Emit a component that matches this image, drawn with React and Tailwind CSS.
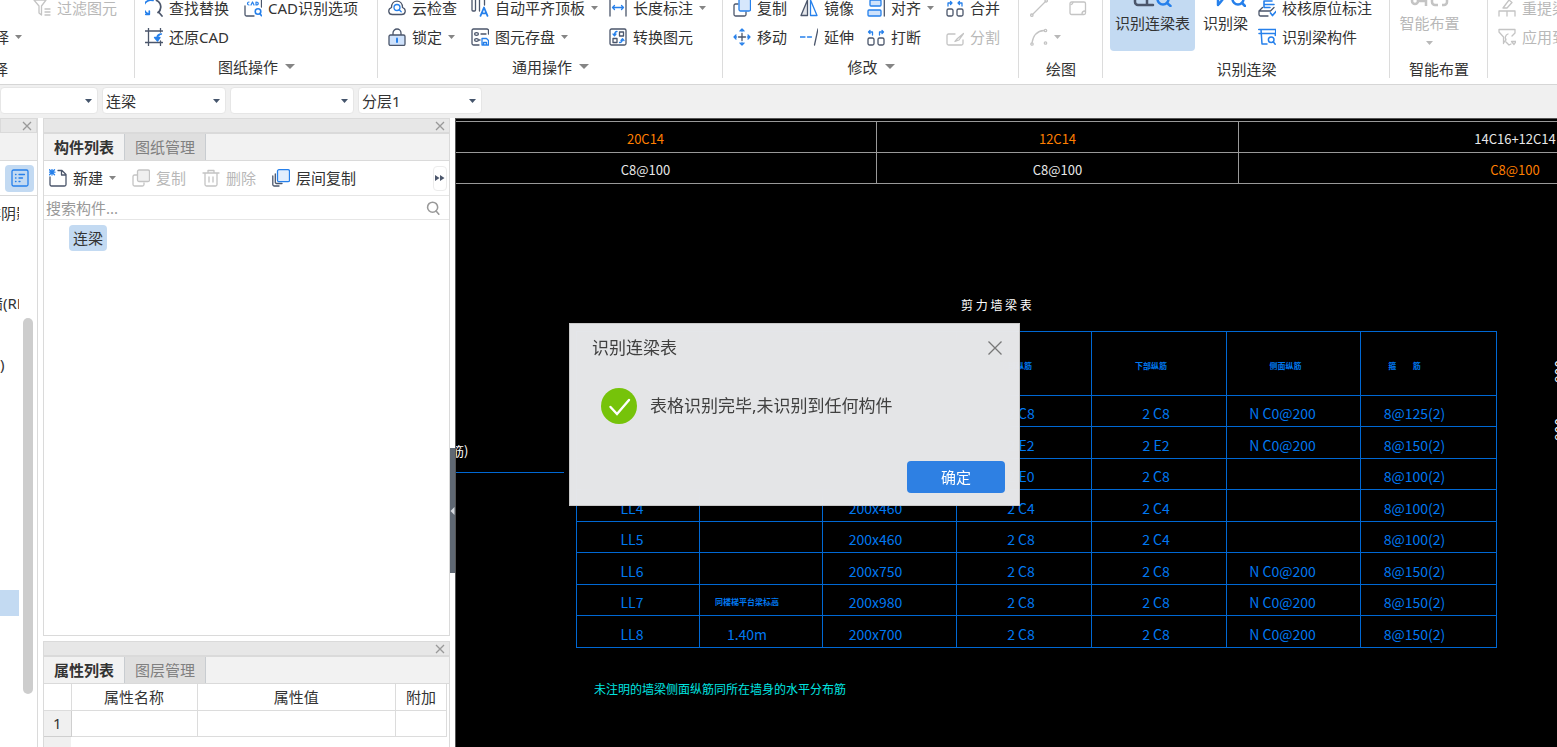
import { useState } from "react";

const DARK = "#4b566b";
const BLUE = "#2680eb";
const MUTED = "#c4c4c4";

function Icon({ children, size = 18, className = "" }) {
  return (
    <svg
      width={size}
      height={size}
      viewBox="0 0 18 18"
      fill="none"
      strokeWidth="1.3"
      strokeLinecap="round"
      strokeLinejoin="round"
      aria-hidden="true"
      className={`shrink-0 ${className}`}
    >
      {children}
    </svg>
  );
}

const icons = {
  filter: (
    <g stroke={MUTED}>
      <path d="M1 1h12l-4.500 6v9L6 14V7z" />
      <path d="M12 10h5M12 13h5M12 16h5" />
    </g>
  ),
  replace: (
    <>
      <path d="M8 1.500A7 7 0 0 0 3.500 15M.8 15.300h3.500v-3.200" stroke={BLUE} strokeWidth="1.700" />
      <path d="M11.500 1.500a7 7 0 0 1 1.500 12M13 13.500c1.500-1 2-1 2-3M14 13.500l3 3.500" stroke={DARK} strokeWidth="1.700" />
    </>
  ),
  cadOption: (
    <>
      <path d="M1 7V15.500a1.500 1.500 0 0 0 1.500 1.500H10M17.500 1v7" stroke={DARK} />
      <path d="M5 3a1.500 1.500 0 1 0 0 3M7 6l1.500-3L10 6M12 3v3c3 0 3-3 0-3" stroke={BLUE} strokeWidth="1.200" />
      <circle cx="14" cy="12.500" r="2.800" stroke={BLUE} strokeWidth="1.600" />
      <path d="M15.800 14.500l1.700 2.200" stroke={BLUE} strokeWidth="1.600" />
    </>
  ),
  restore: (
    <>
      <path d="M3.500 0v18M0 3h17.500M0 14.500h17.500M15.500 0v4M15.500 13v4.500" stroke={DARK} />
      <path d="M16.500 6c-3.500 0-4.500 1.500-4.500 4M9.500 9.500l3 3.500 2.500-3.500z" stroke={BLUE} fill={BLUE} />
    </>
  ),
  cloud: (
    <>
      <path d="M4.500 15.500C0 15.500-.5 10 3.500 8.500 3.500 0 14.500 0 14.500 8.500c4 1.500 3.500 7-1 7z" stroke={DARK} />
      <circle cx="9" cy="8.500" r="3" stroke={BLUE} />
      <path d="M11.200 10.800l2 2" stroke={BLUE} />
    </>
  ),
  lock: (
    <>
      <path d="M5 7V5a4 4 0 0 1 8 0v2" stroke={DARK} />
      <rect x="1" y="7" width="16" height="10.500" rx="1.500" fill="#cfe2fb" stroke={DARK} />
      <path d="M9 10.500v3.500" stroke={BLUE} strokeWidth="2" />
    </>
  ),
  alignTop: (
    <>
      <rect x="1" y="-1" width="3.500" height="13" rx="1" stroke={DARK} />
      <path d="M8.500 12V0h5v6" stroke={DARK} />
      <path d="M9.500 16.800L13 8.500l3.500 8.300M10.800 14.300h4.400" stroke={BLUE} strokeWidth="1.800" />
    </>
  ),
  store: (
    <>
      <path d="M17.500 6V2.500A1.500 1.500 0 0 0 16 1H2.500A1.500 1.500 0 0 0 1 2.500v13A1.500 1.500 0 0 0 2.500 17H8" stroke={DARK} />
      <ellipse cx="5.500" cy="6" rx="1.900" ry="1.300" stroke={DARK} />
      <ellipse cx="5.500" cy="12" rx="1.900" ry="1.300" stroke={DARK} />
      <path d="M10 6h5M8 12h1" stroke={DARK} />
      <path d="M11 10.500h4.500l2 2V17H11zM12.500 17v-2.500h3V17" stroke={BLUE} />
    </>
  ),
  measure: (
    <>
      <path d="M1 1v16M17 1v16" stroke={DARK} />
      <path d="M3.500 8.500h11M5.500 6.500l-2 2 2 2M12.500 6.500l2 2-2 2" stroke={BLUE} />
    </>
  ),
  convert: (
    <>
      <rect x="1" y="1" width="16" height="16" rx="1.500" stroke={DARK} />
      <rect x="10.500" y="4" width="4" height="4" stroke={DARK} />
      <rect x="4" y="10.500" width="4" height="4" stroke={DARK} />
      <path d="M8 3.500c-2 0-2.500 1-2.500 4M4 6l1.500 1.700L7 6M10.500 14.500c2.500 0 3-1 3-3.500M12 12.500l1.500-1.700 1.500 1.700" stroke={BLUE} />
    </>
  ),
  copy: (
    <>
      <path d="M5 5H2.500A1.500 1.500 0 0 0 1 6.500v9A1.500 1.500 0 0 0 2.500 17h9a1.500 1.500 0 0 0 1.500-1.500V13" stroke={DARK} />
      <rect x="6" y="0" width="11.500" height="12" rx="1.500" fill="#d6e7fc" stroke={BLUE} />
    </>
  ),
  move: (
    <>
      <path d="M9 5.500v7M5.500 9h7" stroke={DARK} />
      <path d="M9 3.500V1M7 3l2-2 2 2M9 14.500V17M7 15l2 2 2-2M3.500 9H1M3 7L1 9l2 2M14.500 9H17M15 7l2 2-2 2" stroke={BLUE} />
    </>
  ),
  mirror: (
    <>
      <path d="M7.500 1v15.500H1z" stroke={DARK} fill="#e4e6ea" />
      <path d="M10.500 1v15.500H17z" stroke={BLUE} />
    </>
  ),
  extend: (
    <>
      <path d="M0 9h5M7.500 9h4" stroke={BLUE} />
      <path d="M18 1l-3.500 16" stroke={DARK} />
    </>
  ),
  align: (
    <>
      <path d="M17.300 0v17" stroke={DARK} />
      <rect x="3" y="1" width="11" height="6" rx="1" fill="#cfe2fb" stroke={BLUE} />
      <rect x="1" y="11" width="13" height="6" rx="1" fill="#cfe2fb" stroke={BLUE} />
    </>
  ),
  split: (
    <>
      <rect x="1" y="10" width="6" height="7" rx="1.500" stroke={DARK} />
      <rect x="11" y="10" width="6" height="7" rx="1.500" stroke={DARK} />
      <path d="M5.500 7V4H1.500M3 2.500L1.500 4 3 5.500M12.500 7V4h4M15 2.500L16.500 4 15 5.500" stroke={BLUE} />
    </>
  ),
  merge: (
    <>
      <rect x="1" y="10" width="6" height="7" rx="1.500" stroke={DARK} />
      <rect x="11" y="10" width="6" height="7" rx="1.500" stroke={DARK} />
      <path d="M2 7V4h4M4.500 2.500L6 4 4.500 5.500M16 7V4h-4M13.500 2.500L12 4l1.500 1.500" stroke={BLUE} />
    </>
  ),
  cut: (
    <g stroke={MUTED}>
      <path d="M9 6H2.500A1.500 1.500 0 0 0 1 7.500v8A1.500 1.500 0 0 0 2.500 17h13a1.500 1.500 0 0 0 1.500-1.500V12" />
      <path d="M17.500 5.500l-6 5-2.500 3 4-1.500z" />
    </g>
  ),
  line: (
    <g stroke={MUTED}>
      <path d="M2.500 15.500l13-13" />
      <circle cx="1.800" cy="16.200" r="1.200" />
      <circle cx="16.200" cy="1.800" r="1.200" />
    </g>
  ),
  rect: (
    <g stroke={MUTED}>
      <rect x="1" y="3" width="15.500" height="12.500" rx="1.500" />
      <path d="M13 15a3 3 0 0 1 3-3M2 5.500a2.500 2.500 0 0 0 2-2" />
    </g>
  ),
  arc: (
    <g stroke={MUTED}>
      <path d="M2 15C3 8 7 3 14 2.500" />
      <circle cx="2" cy="16" r="1.200" />
      <circle cx="15.500" cy="2.500" r="1.200" />
      <circle cx="15.500" cy="15" r="1.200" />
    </g>
  ),
  verify: (
    <>
      <path d="M6 8V2h8M6 5.500h10M6 8.500h6" stroke={BLUE} strokeWidth="1.600" />
      <path d="M10 17H2.500A1.500 1.500 0 0 1 1 15.500V12l3.500-3.500M1 12h11.500L16 8.500" stroke={DARK} />
      <path d="M12.500 14l2 2.500 3.500-4" stroke={BLUE} strokeWidth="1.700" />
    </>
  ),
  beamPart: (
    <>
      <path d="M.7 1.500h17v4H3M3 1.500l1 14.500h5M17.300 5.500v2M3 5.500H1" stroke={BLUE} strokeWidth="1.500" />
      <circle cx="13.200" cy="11.800" r="2.800" stroke={BLUE} strokeWidth="1.500" />
      <path d="M15.200 13.800l2 2.400" stroke={BLUE} strokeWidth="1.500" />
    </>
  ),
  relabel: (
    <g stroke={MUTED}>
      <path d="M1 17v-5h16v5M9 12v5M5 9l6-8 3 2.500L9 9z" />
    </g>
  ),
  apply: (
    <g stroke={MUTED}>
      <path d="M5.500 15.500V9L1 4V1.500h16V5l-3 3M8 11l-1.500 3M8 14l3 3 2-1M10 6a4 4 0 0 0-2 6M13.500 13.500l2.500 3 2-3z" />
    </g>
  ),
  newDoc: (
    <>
      <path d="M9 1.500h4l4 4V15.500a1.500 1.500 0 0 1-1.500 1.500h-13A1.500 1.500 0 0 1 1 15.500V8M12.500 1.500v4.500H17" stroke={DARK} />
      <path d="M.5 .8l5 4.900M5.500 .8l-5 4.900M3 .5v5.500M0 3.200h6" stroke={BLUE} />
    </>
  ),
  copyOff: (
    <g stroke={MUTED}>
      <path d="M5 6H2.500A1.500 1.500 0 0 0 1 7.500v8A1.500 1.500 0 0 0 2.500 17h8a1.500 1.500 0 0 0 1.500-1.500V14" />
      <rect x="5.500" y="1" width="12" height="11.500" rx="1.500" fill="#f0f0f0" />
    </g>
  ),
  trash: (
    <g stroke={MUTED}>
      <path d="M1 4h16M6 4V1.500h6V4M3 4v11.500A1.500 1.500 0 0 0 4.500 17h9a1.500 1.500 0 0 0 1.500-1.500V4M7 8v5M11 8v5" />
    </g>
  ),
  layerCopy: (
    <>
      <path d="M.8 7v8.500A1.500 1.500 0 0 0 2.300 17H7M3.300 5v7.500A1.500 1.500 0 0 0 4.800 14.500H10" stroke={DARK} />
      <rect x="5.500" y=".7" width="12" height="12" rx="1.500" fill="#e2eefd" stroke={BLUE} />
    </>
  ),
  list: (
    <g stroke={BLUE}>
      <rect x="1" y="1" width="16" height="16" rx="1.500" />
      <path d="M4.500 5.500h.5M8 5.500h5.500M4.500 9h.5M8 9h3.500M4.500 12.500h.5M8 12.500h1" />
    </g>
  ),
  search: (
    <g stroke="#999999" strokeWidth="2">
      <circle cx="8.500" cy="8" r="6.500" />
      <path d="M13 13l3.500 4" />
    </g>
  ),
};

function Caret({ large = false, color = "text-[#858585]" }) {
  return (
    <svg
      width={large ? 10 : 7}
      height={large ? 5 : 4}
      viewBox="0 0 8 4"
      preserveAspectRatio="none"
      aria-hidden="true"
      className={`shrink-0 ${color}`}
    >
      <path d="M0 0h8L4 4z" fill="currentColor" />
    </svg>
  );
}

function Tool({ icon, label, caret, disabled }) {
  return (
    <button
      type="button"
      disabled={disabled}
      className={`flex items-center gap-[6px] whitespace-nowrap ${disabled ? "text-[#b8b8b8]" : "text-[#333]"}`}
    >
      <Icon>{icons[icon]}</Icon>
      {label && <span>{label}</span>}
      {caret && <Caret color={disabled ? "text-[#b8b8b8]" : "text-[#858585]"} />}
    </button>
  );
}

function Group({ title, caret, className, children }) {
  return (
    <section className={`relative flex shrink-0 flex-col ${className}`}>
      <div className="flex-1">{children}</div>
      <div className={`flex h-[33px] items-center justify-center gap-[7px] ${caret ? "pb-[2px]" : "pt-[3px]"}`}>
        <span>{title}</span>
        {caret && <Caret large />}
      </div>
      <span className="absolute right-0 bottom-[6px] top-0 w-px bg-[#dcdcdc]" />
    </section>
  );
}

function Ribbon() {
  return (
    <header className="overflow-hidden border-b border-[#d6d6d6] bg-white">
      <div className="-mt-[7px] flex">
        <section className="relative flex w-[135px] shrink-0 flex-col">
          <div className="flex h-[29px] items-center pl-[33px]">
            <Tool icon="filter" label="过滤图元" disabled />
          </div>
          <button type="button" className="-ml-[6px] flex h-[29px] items-center gap-[6px]">
            择 <Caret />
          </button>
          <div className="-ml-[7px] flex h-[33px] items-center pt-[3px]">择</div>
          <span className="absolute right-0 bottom-[6px] top-0 w-px bg-[#dcdcdc]" />
        </section>

        <Group title="图纸操作" caret className="w-[243px]">
          <div className="grid auto-rows-[29px] grid-cols-[99px_auto] pl-[10px]">
            <Tool icon="replace" label="查找替换" />
            <Tool icon="cadOption" label="CAD识别选项" />
            <Tool icon="restore" label="还原CAD" />
          </div>
        </Group>

        <Group title="通用操作" caret className="w-[345px]">
          <div className="grid auto-rows-[29px] grid-cols-[83px_138px_auto] pl-[10px]">
            <Tool icon="cloud" label="云检查" />
            <Tool icon="alignTop" label="自动平齐顶板" caret />
            <Tool icon="measure" label="长度标注" caret />
            <Tool icon="lock" label="锁定" caret />
            <Tool icon="store" label="图元存盘" caret />
            <Tool icon="convert" label="转换图元" />
          </div>
        </Group>

        <Group title="修改" caret className="w-[296px]">
          <div className="grid auto-rows-[29px] grid-cols-[67px_67px_79px_auto] pl-[10px]">
            <Tool icon="copy" label="复制" />
            <Tool icon="mirror" label="镜像" />
            <Tool icon="align" label="对齐" caret />
            <Tool icon="merge" label="合并" />
            <Tool icon="move" label="移动" />
            <Tool icon="extend" label="延伸" />
            <Tool icon="split" label="打断" />
            <Tool icon="cut" label="分割" disabled />
          </div>
        </Group>

        <Group title="绘图" className="w-[84px]">
          <div className="grid auto-rows-[29px] grid-cols-[39px_auto] pl-[11px]">
            <Tool icon="line" disabled />
            <Tool icon="rect" disabled />
            <Tool icon="arc" caret disabled />
          </div>
        </Group>

        <Group title="识别连梁" className="w-[287px]">
          <div className="flex pl-[7px]">
            <button type="button" className="flex h-[58px] w-[85px] flex-col items-center rounded-b bg-[#c3daf2]">
              <svg width="40" height="14" viewBox="0 0 40 14" fill="none" strokeWidth="2.500" strokeLinecap="round">
                <path d="M2 2v7a3 3 0 0 0 3 3h15M14 3v8M2 5h12" stroke={DARK} />
                <circle cx="30" cy="6" r="5.500" stroke={BLUE} />
                <path d="M34 10l3.500 3" stroke={BLUE} />
              </svg>
              <span className="mt-[6px] leading-5">识别连梁表</span>
            </button>
            <button type="button" className="flex w-[61px] flex-col items-center">
              <svg width="40" height="14" viewBox="0 0 40 14" fill="none" strokeWidth="2.500" strokeLinecap="round">
                <path d="M12 2v10M13 11l4-5" stroke={BLUE} />
                <circle cx="32" cy="6" r="5.500" stroke={BLUE} />
                <path d="M36 10l3 3" stroke={BLUE} />
              </svg>
              <span className="mt-[6px] leading-5">识别梁</span>
            </button>
            <div className="grid auto-rows-[29px] pl-[2px]">
              <Tool icon="verify" label="校核原位标注" />
              <Tool icon="beamPart" label="识别梁构件" />
            </div>
          </div>
        </Group>

        <Group title="智能布置" className="w-[98px]">
          <button type="button" disabled className="flex w-[79px] flex-col items-center text-[#b8b8b8]">
            <svg width="40" height="14" viewBox="0 0 40 14" fill="none" stroke={MUTED} strokeWidth="2.500">
              <circle cx="5" cy="8" r="3" />
              <path d="M9 8h7V0M16 8v5M22 3v6a3 3 0 0 0 3 3h3M32 12h2a3 3 0 0 0 3-3V3M30 3v3M26 5h8" />
            </svg>
            <span className="mt-[6px] leading-5">智能布置</span>
            <span className="mt-[8px]">
              <Caret color="text-[#b8b8b8]" />
            </span>
          </button>
        </Group>

        <section className="grid auto-rows-[29px] pl-[10px]">
          <Tool icon="relabel" label="重提梁跨" disabled />
          <Tool icon="apply" label="应用到同名梁" disabled />
        </section>
      </div>
    </header>
  );
}

function Combo({ label, value, className }) {
  return (
    <div className={`relative shrink-0 ${className}`}>
      <select
        aria-label={label}
        defaultValue={value}
        className="h-[27px] w-full appearance-none rounded border border-[#e6e6e6] bg-white pl-[3px] text-[#333] outline-none"
      >
        <option>{value}</option>
      </select>
      <span className="pointer-events-none absolute inset-y-0 right-[6px] flex items-center">
        <Caret color="text-slate-600" />
      </span>
    </div>
  );
}

function PanelHeader() {
  return (
    <div className="flex h-[15px] shrink-0 items-center justify-end border border-[#dadada] bg-[#e7e7e7] pr-[4px]">
      <button type="button" aria-label="关闭" className="text-[#999]">
        <svg width="10" height="10" viewBox="0 0 10 10" stroke="currentColor" strokeWidth="1.300">
          <path d="M1 1l8 8M9 1L1 9" />
        </svg>
      </button>
    </div>
  );
}

function Tabs({ tabs }) {
  const [active, setActive] = useState(0);
  return (
    <div className="flex h-[28px] shrink-0 border border-[#dadada] bg-[#f2f2f2]">
      {tabs.map((tab, i) => (
        <button
          key={tab}
          type="button"
          onClick={() => setActive(i)}
          className={`border-r border-[#c8ccd0] px-[10px] ${
            i === active ? "bg-[#f2f2f2] font-bold text-[#333]" : "bg-[#dfdfdf] text-[#808080]"
          }`}
        >
          {tab}
        </button>
      ))}
    </div>
  );
}

const navItems = [
  { label: "非阴影", space: "mt-[4px]", indent: "-ml-[14px]" },
  { label: "墙(RF", space: "mt-[64px]", indent: "-ml-[12px]" },
  { label: ")", space: "mt-[35px]", indent: "" },
  { label: "", space: "mt-[213px]", indent: "", selected: true },
];

function NavPanel() {
  return (
    <aside className="flex w-[38px] shrink-0 flex-col border-r border-[#dadada] bg-white">
      <PanelHeader />
      <div className="h-[27px] shrink-0 bg-[#f2f2f2]" />
      <div className="flex h-[36px] shrink-0 items-center border-y border-[#dadada] pl-[5px]">
        <button type="button" aria-label="列表" className="flex h-[27px] w-[29px] items-center justify-center rounded bg-[#c3daf2]">
          <Icon>{icons.list}</Icon>
        </button>
      </div>
      <div className="flex min-h-0 flex-1">
        <ul className="w-[19px] overflow-hidden whitespace-nowrap">
          {navItems.map((item) => (
            <li
              key={item.label}
              className={`flex h-[26px] items-center ${item.space} ${item.selected ? "bg-[#c3daf2]" : ""}`}
            >
              <span className={item.indent}>{item.label}</span>
            </li>
          ))}
        </ul>
        <div className="ml-[4px] mt-[122px] mb-[53px] w-[10px] rounded-full bg-[#cdcdcd]" />
      </div>
    </aside>
  );
}

function ComponentPanel() {
  return (
    <div className="flex min-h-0 flex-1 flex-col">
      <PanelHeader />
      <Tabs tabs={["构件列表", "图纸管理"]} />
      <div className="flex min-h-0 flex-1 flex-col border-x border-b border-[#dadada]">
        <div className="flex h-[35px] shrink-0 items-center gap-[16px] border-b border-[#e6e6e6] pl-[5px]">
          <Tool icon="newDoc" label="新建" caret />
          <Tool icon="copyOff" label="复制" disabled />
          <Tool icon="trash" label="删除" disabled />
          <Tool icon="layerCopy" label="层间复制" />
          <button
            type="button"
            aria-label="更多"
            className="ml-auto mr-[2px] flex h-[25px] w-[14px] items-center justify-center rounded border border-[#ececec]"
          >
            <svg width="10" height="6" viewBox="0 0 10 6" fill={DARK}>
              <path d="M0 0l4.500 3L0 6zM5 0l4.500 3L5 6z" />
            </svg>
          </button>
        </div>
        <div className="flex h-[24px] shrink-0 items-center border-b border-[#e6e6e6] pl-[2px] pr-[9px]">
          <input
            type="text"
            aria-label="搜索构件"
            placeholder="搜索构件..."
            className="min-w-0 flex-1 outline-none placeholder:text-[#999]"
          />
          <Icon size={14}>{icons.search}</Icon>
        </div>
        <ul className="pl-[25px] pt-[5px]">
          <li className="inline-flex h-[26px] items-center rounded bg-[#c3daf2] px-[4px]">连梁</li>
        </ul>
      </div>
    </div>
  );
}

function PropertyPanel() {
  return (
    <div className="flex shrink-0 flex-col">
      <PanelHeader />
      <Tabs tabs={["属性列表", "图层管理"]} />
      <div className="border-x border-[#dadada] pr-[2px]">
        <table className="w-full table-fixed border-collapse">
          <colgroup>
            <col className="w-[27px]" />
            <col className="w-[126px]" />
            <col />
            <col className="w-[51px]" />
          </colgroup>
          <thead>
            <tr className="h-[26px]">
              {["", "属性名称", "属性值", "附加"].map((head) => (
                <th key={head} className="border-b border-r border-[#dcdcdc] font-normal">
                  {head}
                </th>
              ))}
            </tr>
          </thead>
          <tbody>
            <tr className="h-[26px]">
              <td className="border-b border-r border-[#cfcfcf] bg-[#f0f0f0] text-center">1</td>
              <td className="border-b border-r border-[#dcdcdc]" />
              <td className="border-b border-r border-[#dcdcdc]" />
              <td className="border-b border-r border-[#dcdcdc]" />
            </tr>
            <tr className="h-[11px]">
              <td className="bg-[#f0f0f0]" />
              <td colSpan={3} />
            </tr>
          </tbody>
        </table>
      </div>
    </div>
  );
}

const wallRows = [
  [["20C14", true], ["12C14", true], ["14C16+12C14", false]],
  [["C8@100", false], ["C8@100", false], ["C8@100", true]],
];

const beamHead = ["", "", "", "上部纵筋", "下部纵筋", "侧面纵筋", "箍         筋"];

const beamRows = [
  ["", "", "", "2 C8", "2 C8", "N C0@200", "8@125(2)"],
  ["", "", "", "2 E2", "2 E2", "N C0@200", "8@150(2)"],
  ["", "", "", "2 E0", "2 C8", "", "8@100(2)"],
  ["LL4", "", "200x460", "2 C4", "2 C4", "", "8@100(2)"],
  ["LL5", "", "200x460", "2 C8", "2 C4", "", "8@100(2)"],
  ["LL6", "", "200x750", "2 C8", "2 C8", "N C0@200", "8@150(2)"],
  ["LL7", "同楼梯平台梁标高", "200x980", "2 C8", "2 C8", "N C0@200", "8@150(2)"],
  ["LL8", "1.40m", "200x700", "2 C8", "2 C8", "N C0@200", "8@150(2)"],
];

// Labels are drawn left of the cell centre, by a different amount in each column
const beamCell = ["pr-[12px]", "pr-[28px]", "pr-[28px]", "pr-[6px]", "pr-[6px]", "pr-[22px]", "pr-[28px]"];
const beamHeadCell = ["", "", "", "pr-[16px]", "pr-[16px]", "pr-[16px]", "pr-[48px]"];

function DrawingCanvas() {
  return (
    <main className="relative min-w-0 flex-1 overflow-hidden border-l border-t border-[#555] bg-black font-['Noto_Sans_CJK_SC',sans-serif]">
      <table className="absolute -left-[40px] top-[2px] w-[1376px] table-fixed border-collapse text-center text-[13px] text-[#e8e8e8]">
        <colgroup>
          <col className="w-[460px]" />
          <col className="w-[362px]" />
          <col />
        </colgroup>
        <tbody>
          {wallRows.map((row, r) => (
            <tr key={r} className="h-[31px]">
              {row.map(([text, marked], c) => (
                <td
                  key={c}
                  className={`border border-[#999] p-0 pt-[4px] leading-5 ${c === 0 ? "pr-[2px]" : ""} ${marked ? "text-[#ff7f00]" : ""}`}
                >
                  {text}
                </td>
              ))}
            </tr>
          ))}
        </tbody>
      </table>

      <h2 className="absolute left-[505px] top-[176px] text-[12px] leading-5 text-white">剪 力 墙 梁 表</h2>

      <table className="absolute left-[120px] top-[212px] w-[921px] table-fixed border-collapse text-center text-[14px] text-[#0078f0]">
        <colgroup>
          <col className="w-[123px]" />
          <col className="w-[123px]" />
          <col className="w-[134px]" />
          <col className="w-[135px]" />
          <col className="w-[135px]" />
          <col className="w-[134px]" />
          <col />
        </colgroup>
        <thead>
          <tr className="h-16">
            {beamHead.map((head, c) => (
              <th key={c} className={`whitespace-pre border border-[#0068d4] p-0 pt-[4px] text-[8px] font-bold ${beamHeadCell[c]}`}>
                {head}
              </th>
            ))}
          </tr>
        </thead>
        <tbody>
          {beamRows.map((row, r) => (
            <tr key={r} className="odd:h-[31px] even:h-8">
              {row.map((text, c) => (
                <td
                  key={c}
                  className={`border border-[#0068d4] p-0 pt-[4px] leading-5 ${beamCell[c]} ${c === 1 && text.length === 8 ? "text-[8px] font-bold" : ""}`}
                >
                  {text}
                </td>
              ))}
            </tr>
          ))}
        </tbody>
      </table>

      <p className="absolute left-[138px] top-[560px] whitespace-nowrap text-[12px] leading-5 text-[#00e5e0]">
        未注明的墙梁侧面纵筋同所在墙身的水平分布筋
      </p>

      <span className="absolute -left-[5px] top-[322px] text-[13px] leading-5 text-white">筋)</span>
      <span className="absolute left-0 top-[353px] h-px w-[108px] bg-[#0068d4]" />
      <span className="absolute left-[1093px] top-[241px] rotate-180 text-[14px] leading-5 text-white [writing-mode:vertical-rl]">
        800
      </span>
      <span className="absolute left-[1093px] top-[299px] rotate-180 text-[14px] leading-5 text-white [writing-mode:vertical-rl]">
        800
      </span>

      <ResultDialog />
    </main>
  );
}

function ResultDialog() {
  const [open, setOpen] = useState(true);
  if (!open) return null;

  return (
    <div
      role="dialog"
      aria-label="识别连梁表"
      className="absolute left-[113px] top-[204px] w-[451px] border border-[#c9c9c9] bg-[#ebecee]/97 font-['Noto_Sans','Noto_Sans_CJK_SC',sans-serif] text-[17px] leading-6 text-[#404040] backdrop-blur-md"
    >
      <div className="flex items-center justify-between pl-[22px] pr-[17px] pt-[12px]">
        <span>识别连梁表</span>
        <button type="button" aria-label="关闭" onClick={() => setOpen(false)} className="text-[#777]">
          <svg width="14" height="14" viewBox="0 0 14 14" stroke="currentColor" strokeWidth="1.300">
            <path d="M.5.5l13 13M13.500.5l-13 13" />
          </svg>
        </button>
      </div>
      <div className="flex items-center gap-[13px] pl-[31px] pt-[28px]">
        <svg width="36" height="36" viewBox="0 0 36 36" fill="none" aria-hidden="true">
          <circle cx="18" cy="18" r="18" fill="#76c30a" />
          <path d="M9.500 19l6.500 7L28 12" stroke="white" strokeWidth="2.400" strokeLinecap="round" />
        </svg>
        <p>表格识别完毕,未识别到任何构件</p>
      </div>
      <div className="flex justify-end pb-[12px] pr-[14px] pt-[37px]">
        <button
          type="button"
          onClick={() => setOpen(false)}
          className="h-8 w-[98px] rounded bg-[#2e80e3] text-[15px] text-white"
        >
          确定
        </button>
      </div>
    </div>
  );
}

export default function App() {
  return (
    <div className="flex h-screen flex-col overflow-hidden bg-white font-['Noto_Sans','Noto_Sans_CJK_SC',sans-serif] text-[15px] leading-5 text-[#333]">
      <Ribbon />
      <div className="flex shrink-0 gap-[4px] bg-[#f0f0f0] pb-[4px] pt-[2px]">
        <Combo label="楼层" value="" className="w-[98px]" />
        <Combo label="构件类型" value="连梁" className="w-[124px]" />
        <Combo label="构件" value="" className="w-[124px]" />
        <Combo label="分层" value="分层1" className="w-[124px]" />
      </div>
      <div className="flex min-h-0 flex-1">
        <NavPanel />
        <div className="ml-[5px] flex w-[407px] shrink-0 flex-col gap-[5px]">
          <ComponentPanel />
          <PropertyPanel />
        </div>
        <div className="flex w-[5px] shrink-0 flex-col items-center">
          <button
            type="button"
            aria-label="收起面板"
            className="mt-[330px] flex h-[125px] w-[5px] items-center bg-[#5f6873]"
          >
            <svg width="5" height="8" viewBox="0 0 5 8" fill="#d5d9de">
              <path d="M4.500 0v8L.5 4z" />
            </svg>
          </button>
        </div>
        <DrawingCanvas />
      </div>
    </div>
  );
}
